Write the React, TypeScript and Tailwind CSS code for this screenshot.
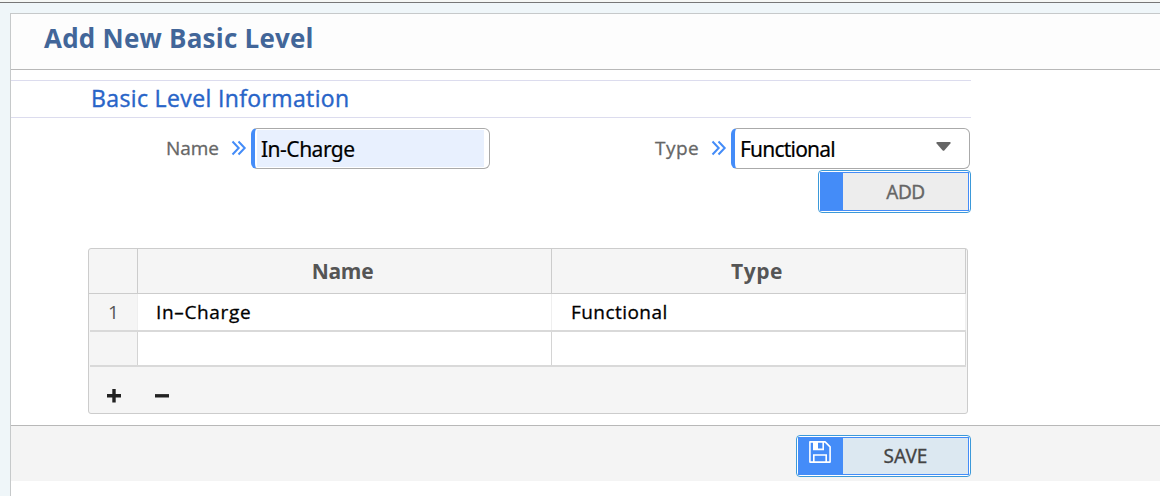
import React from 'react';

interface Level {
  name: string;
  type: string;
}

const levels: Level[] = [
  { name: 'In–Charge', type: 'Functional' },
  { name: '', type: '' },
];

const RequiredMark: React.FC = () => (
  <svg className="h-[16px] w-[16px] shrink-0" viewBox="0 0 16 16" fill="none" stroke="#448cf8" strokeWidth="2">
    <path d="M1.5 1.5 7.7 8 1.5 14.5M7.5 1.5 13.7 8 7.5 14.5" />
  </svg>
);

const SaveIcon: React.FC = () => (
  <svg className="h-[22px] w-[22px]" viewBox="0 0 22 22" fill="none" stroke="white" strokeWidth="1.6">
    <path d="M.9.9h15.2l5 5v15.2H.9z" strokeLinejoin="round" />
    <path d="M4.8 1v7.4h9.4V1M4.8 21v-7h12.4v7" />
    <path d="M5 1h4v7H5z" fill="white" stroke="none" />
  </svg>
);

const TableRow: React.FC<{ level: Level; index: number }> = ({ level, index }) => {
  const filled = level.name !== '';
  const line = filled ? 'border-[#efefef]' : 'border-[#d4d4d4]';
  return (
    <div className={`flex border-b-2 border-[#d9d9d9] text-[19px] text-black ${filled ? 'h-[38px]' : 'h-[35px]'}`}>
      <div className={`flex w-[48px] items-center justify-center border-r bg-[#f5f5f5] text-[#555] ${line}`}>
        {filled && index + 1}
      </div>
      <div className={`flex w-[414px] items-center border-r bg-white pl-[18px] tracking-[0.65px] [-webkit-text-stroke:0.3px] ${line}`}>
        {level.name}
      </div>
      <div className={`flex w-[414px] items-center border-r bg-white pl-[19px] tracking-[0.45px] [-webkit-text-stroke:0.3px] ${line}`}>
        {level.type}
      </div>
    </div>
  );
};

const App: React.FC = () => {
  return (
    <div className="flex h-[496px] w-[1160px] flex-col overflow-hidden bg-[#eff6f9] font-['Open_Sans',sans-serif]">
      <div className="h-[3px] shrink-0 border-b border-[#777] bg-[#f5f7f5]" />
      <main className="mt-[10px] ml-[10px] flex flex-1 flex-col border-t border-l border-[#c6c9ca] bg-white">
        <header className="flex h-[56px] shrink-0 items-center border-b border-[#b8b8b8] bg-[#fdfdfd] pb-[7px] pl-[33px]">
          <h1 className="text-[26px] leading-none font-bold tracking-[0.23px] whitespace-nowrap text-[#426699]">
            Add New Basic Level
          </h1>
        </header>

        <div className="mt-[10px] flex h-[38px] w-[960px] shrink-0 items-center border-y border-[#dcdcee] pb-[2px] pl-[80px]">
          <h2 className="text-[23px] leading-none tracking-[0.37px] whitespace-nowrap text-[#2864c8] [-webkit-text-stroke:0.4px]">
            Basic Level Information
          </h2>
        </div>

        <div className="mt-[10px] flex h-[41px] w-[959px] shrink-0 text-[19px] text-[#666]">
          <label className="flex flex-1 items-center justify-end pr-[4px] pb-[2px]">
            <span className="mt-[2px] mr-[12px] [-webkit-text-stroke:0.3px]">Name</span>
            <RequiredMark />
          </label>
          <div className="flex w-[239px] rounded-[6px] border border-l-4 border-[#aaa] border-l-[#448cf8] bg-white py-px pr-[5px] pl-[2px]">
            <div className="flex flex-1 items-center bg-[#e8f0fe] pt-[2px] pl-[4px] font-['Noto_Sans',sans-serif] text-[21px] tracking-[-0.5px] text-black [-webkit-text-stroke:0.2px]">
              In-Charge
            </div>
          </div>
          <label className="flex w-[241px] items-center justify-end pr-[4px] pb-[2px]">
            <span className="mt-[2px] mr-[12px] tracking-[0.4px] [-webkit-text-stroke:0.3px]">Type</span>
            <RequiredMark />
          </label>
          <div className="flex w-[239px] items-center justify-between rounded-[6px] border border-l-4 border-[#aaa] border-l-[#448cf8] bg-white pr-[18px] pl-[5px] font-['Noto_Sans',sans-serif] text-[21px] tracking-[-0.8px] text-black">
            <span className="pt-[2px] [-webkit-text-stroke:0.2px]">Functional</span>
            <svg className="mb-[4px] h-[9px] w-[15px]" viewBox="0 0 15 9">
              <path d="M1 0h13q1 .5.4 1.5L8.5 8.3q-1 1-2 0L.6 1.5Q0 .5 1 0" fill="#666" />
            </svg>
          </div>
        </div>

        <button className="mt-px ml-[807px] flex h-[43px] w-[153px] shrink-0 rounded-[4px] border border-[#3b99d9] bg-white p-px font-['Noto_Sans',sans-serif] text-[19px] text-[#666]">
          <span className="flex h-[39px] flex-1 border border-[#448cf8] bg-[#ededed]">
            <span className="w-[22px] bg-[#448cf8]" />
            <span className="flex flex-1 items-center justify-center pt-[2px] tracking-[-0.5px] [-webkit-text-stroke:0.3px]">ADD</span>
          </span>
        </button>

        <section className="mt-[35px] ml-[77px] h-[166px] w-[880px] shrink-0 rounded-[3px] border border-[#ccc] bg-[#f5f5f5] pr-px">
          <div className="flex h-[45px] border-b border-[#ccc] text-[21px] font-bold tracking-[-0.3px] text-[#555]">
            <div className="w-[49px] border-r border-[#ccc]" />
            <div className="flex w-[414px] items-center justify-center border-r border-[#ccc] pt-[2px] pr-[4px]">Name</div>
            <div className="flex w-[414px] items-center justify-center border-r border-[#ccc] pt-[2px] pr-[3px] tracking-[0.6px]">Type</div>
          </div>
          <div className="pl-px">
            {levels.map((level, index) => (
              <TableRow key={index} level={level} index={index} />
            ))}
          </div>
          <div className="flex h-[46px] items-center gap-[34px] pt-[12px] pl-[18px]">
            <svg className="h-[14px] w-[14px]" viewBox="0 0 14 14" stroke="#222" strokeWidth="3.4">
              <path d="M0 6.8h14M7 0v13.6" />
            </svg>
            <svg className="h-[14px] w-[14px]" viewBox="0 0 14 14" stroke="#222" strokeWidth="3.4">
              <path d="M0 6.8h14" />
            </svg>
          </div>
        </section>

        <footer className="mt-[11px] h-[56px] shrink-0 border-t border-[#b8b8b8] bg-[#f4f4f4] pt-[9px] pl-[785px]">
          <button className="flex h-[42px] w-[175px] rounded-[4px] border border-[#3b99d9] bg-white p-px font-['Noto_Sans',sans-serif] text-[19px] text-[#444]">
            <span className="flex h-[38px] flex-1 border border-[#448cf8] bg-[#dce8f1]">
              <span className="flex w-[44px] justify-center bg-[#448cf8] pt-[3px] pr-[2px]">
                <SaveIcon />
              </span>
              <span className="flex flex-1 items-center justify-center [-webkit-text-stroke:0.3px]">SAVE</span>
            </span>
          </button>
        </footer>
      </main>
    </div>
  );
};

export default App;
